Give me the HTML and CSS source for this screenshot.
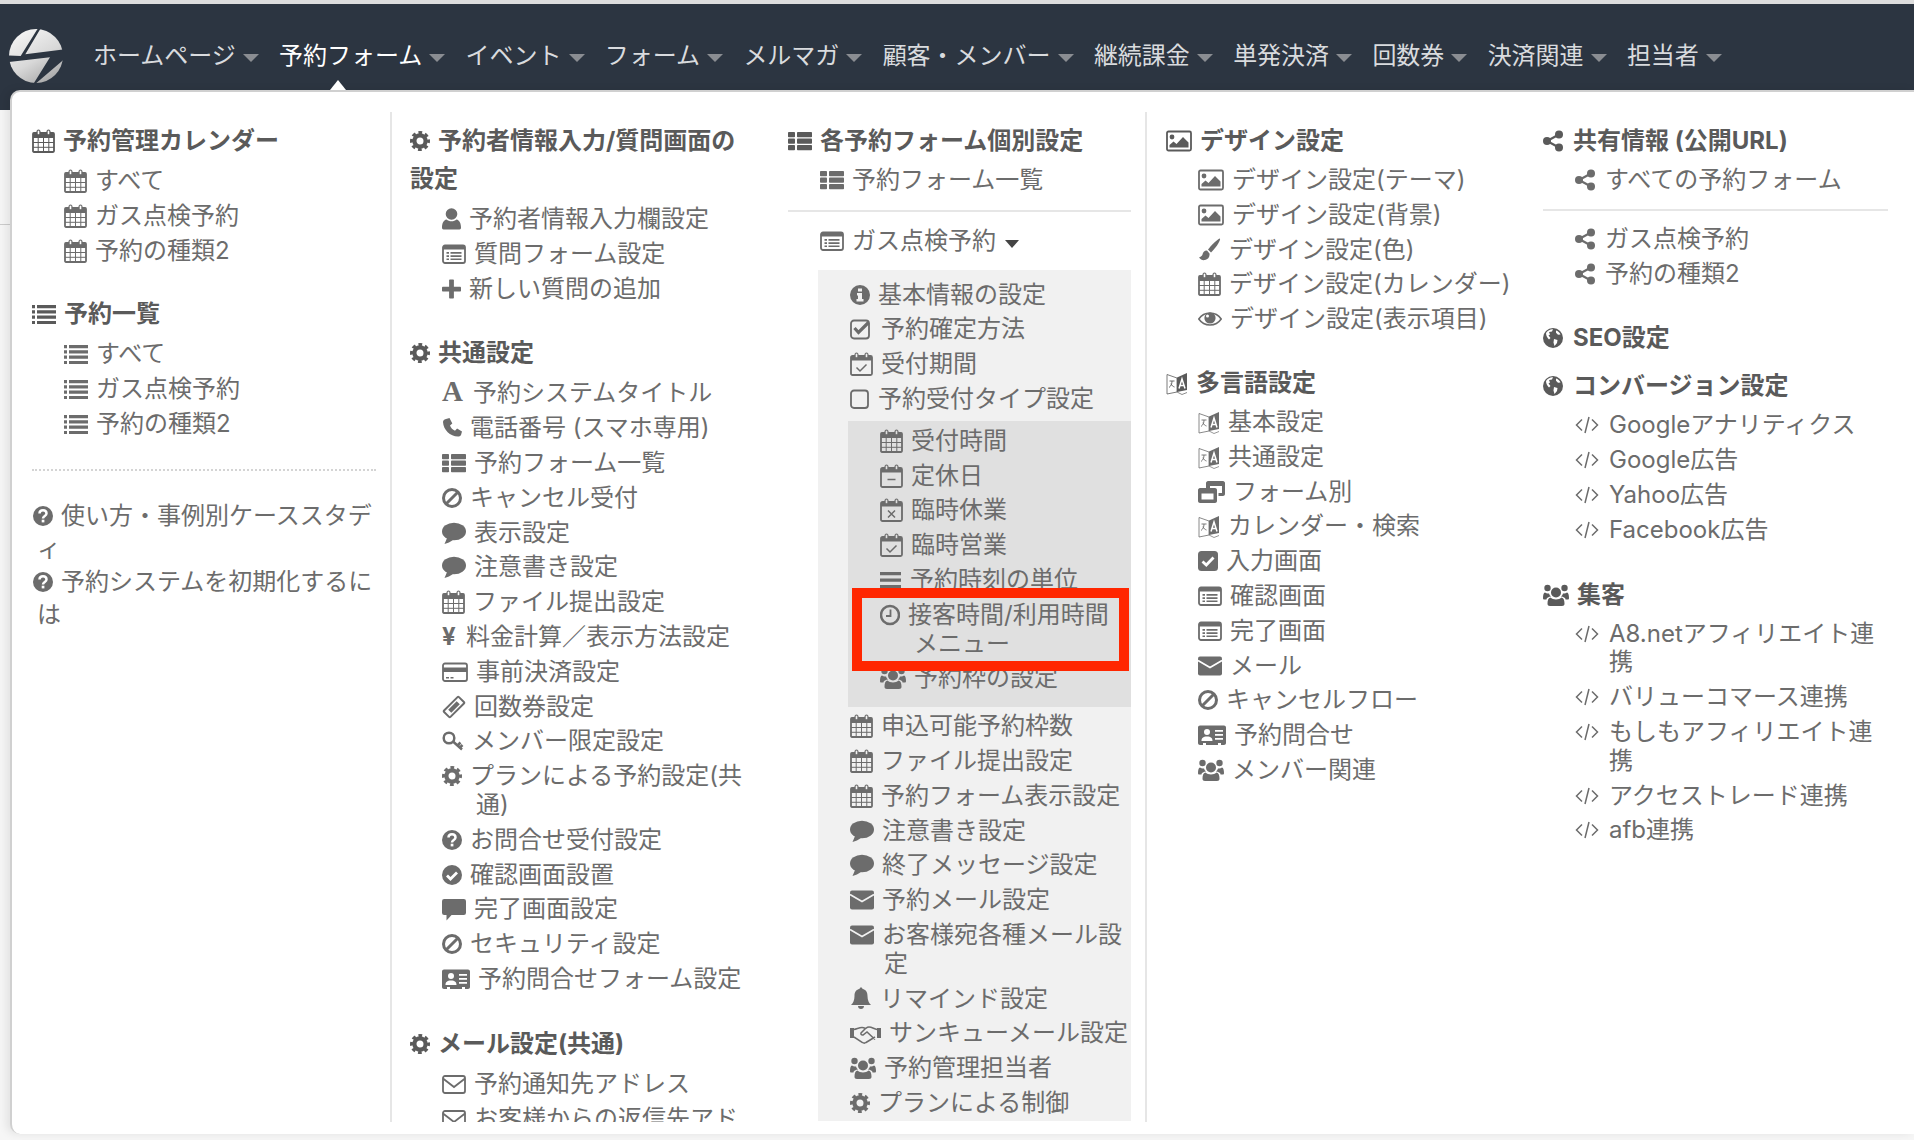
FILE: index.html
```html
<!DOCTYPE html>
<html lang="ja">
<head>
<meta charset="utf-8">
<title>予約フォーム</title>
<link rel="stylesheet" href="styles.css">
</head>
<body>
<svg class="defs" aria-hidden="true">
  <defs>
    <linearGradient id="lg" x1="0.2" y1="0" x2="0.8" y2="1"><stop offset="0" stop-color="#f6f6f6"/><stop offset="0.55" stop-color="#d8d8d8"/><stop offset="1" stop-color="#a4a4a4"/></linearGradient>
    <symbol id="cal" viewBox="0 0 23 24"><path d="M1.9 4h19.2c.5 0 .9.4.9.9v17.2c0 .5-.4.9-.9.9H1.900c-.5 0-.9-.4-.9-.9V4.900c0-.5.4-.9.900-.9z" fill="none" stroke="currentColor" stroke-width="1.800"/><rect x="1" y="4" width="21" height="5"/><path d="M1 13.500h21M1 18.300h21M6.200 9v14M11.500 9v14M16.800 9v14" fill="none" stroke="currentColor" stroke-width="1"/><rect x="4.500" y=".5" width="4" height="7" rx="2"/><rect x="14.500" y=".5" width="4" height="7" rx="2"/><rect x="5.700" y="1.700" width="1.600" height="3.500" fill="var(--bg)"/><rect x="15.700" y="1.700" width="1.600" height="3.500" fill="var(--bg)"/></symbol>
    <symbol id="calbase" viewBox="0 0 23 24"><rect x="1" y="4" width="21" height="19" rx="1.500" fill="none" stroke="currentColor" stroke-width="1.800"/><rect x="1" y="4" width="21" height="4.500"/><rect x="4.500" y=".5" width="4" height="7" rx="2"/><rect x="14.500" y=".5" width="4" height="7" rx="2"/><rect x="5.700" y="1.700" width="1.600" height="3.500" fill="var(--bg)"/><rect x="15.700" y="1.700" width="1.600" height="3.500" fill="var(--bg)"/></symbol>
    <symbol id="calcheck" viewBox="0 0 23 24"><use href="#calbase"/><path d="M6.500 15.500l3.500 3.500 6.500-6.500" fill="none" stroke="currentColor" stroke-width="1.500"/></symbol>
    <symbol id="calminus" viewBox="0 0 23 24"><use href="#calbase"/><path d="M7.500 15.500h8" fill="none" stroke="currentColor" stroke-width="1.500"/></symbol>
    <symbol id="caltimes" viewBox="0 0 23 24"><use href="#calbase"/><path d="M8 12.500l7 7M15 12.500l-7 7" fill="none" stroke="currentColor" stroke-width="1.500"/></symbol>
    <symbol id="list" viewBox="0 0 24 24"><path d="M0 3h3v3.200H0zM0 8.300h3v3.200H0zM0 13.600h3v3.200H0zM0 18.900h3v3.200H0zM5 3h19v3.200H5zM5 8.300h19v3.200H5zM5 13.600h19v3.200H5zM5 18.900h19v3.200H5z"/></symbol>
    <symbol id="thlist" viewBox="0 0 24 24"><rect x="0" y="3" width="7" height="5.200" rx=".8"/><rect x="0" y="9.500" width="7" height="5.200" rx=".8"/><rect x="0" y="16" width="7" height="5.200" rx=".8"/><rect x="9" y="3" width="15" height="5.200" rx=".8"/><rect x="9" y="9.500" width="15" height="5.200" rx=".8"/><rect x="9" y="16" width="15" height="5.200" rx=".8"/></symbol>
    <symbol id="gear" viewBox="0 0 20 24"><circle cx="10" cy="12" r="5.600" fill="none" stroke="currentColor" stroke-width="4.200"/><circle cx="10" cy="12" r="8.500" fill="none" stroke="currentColor" stroke-width="3" stroke-dasharray="3.700 2.970" stroke-dashoffset="1.800"/></symbol>
    <symbol id="user" viewBox="0 0 19 24"><circle cx="9.500" cy="7" r="5.800"/><path d="M1.500 22.500c-1 0-1.500-.8-1.500-2 0-4 1.500-7.500 4.500-8 1.300 1.200 3 1.800 5 1.800s3.700-.6 5-1.800c3 .5 4.500 4 4.500 8 0 1.200-.5 2-1.500 2z"/></symbol>
    <symbol id="listalt" viewBox="0 0 24 24"><rect x="1" y="3.500" width="22" height="17.500" rx="2" fill="none" stroke="currentColor" stroke-width="1.800"/><path d="M1 4h22v3.500H1zM4.500 10h2.500v1.700H4.500zM8.500 10h11v1.700h-11zM4.500 13.200h2.500v1.700H4.500zM8.500 13.200h11v1.700h-11zM4.500 16.400h2.500v1.700H4.500zM8.500 16.400h11v1.700h-11z"/></symbol>
    <symbol id="plus" viewBox="0 0 19 24"><rect x="0" y="9.700" width="19" height="4.800" rx=".8"/><rect x="7.100" y="2.500" width="4.800" height="19" rx=".8"/></symbol>
    <symbol id="phone" viewBox="0 0 20 24"><path d="M4 3l3.500-1 2.800 5.500-2.300 2c1 2.500 2.600 4.200 5 5.300l2.100-2.300 4.900 3-1 3.500c-.6 1-2 1.500-3 1.500C8 20.500 1.500 14 1 6c0-1 .8-2.500 3-3z"/></symbol>
    <symbol id="ban" viewBox="0 0 20 24"><circle cx="10" cy="12" r="8.500" fill="none" stroke="currentColor" stroke-width="3"/><path d="M4 18L16 6" fill="none" stroke="currentColor" stroke-width="3"/></symbol>
    <symbol id="comment" viewBox="0 0 24 24"><ellipse cx="12" cy="10.500" rx="12" ry="8.800"/><path d="M5.500 16L2.500 23c3 -.6 6-2.200 8.500-4z"/></symbol>
    <symbol id="commentalt" viewBox="0 0 24 24"><rect x="0" y="2" width="24" height="16" rx="2.200"/><path d="M4.500 17v6.500l6-6.500z"/></symbol>
    <symbol id="credit" viewBox="0 0 26 24"><rect x="1" y="3.500" width="24" height="17.500" rx="2" fill="none" stroke="currentColor" stroke-width="1.800"/><path d="M1 7.500h24v4.500H1zM4 17h3v1.500H4zM8.500 17h3v1.500h-3z"/></symbol>
    <symbol id="ticket" viewBox="0 0 24 24"><g transform="rotate(-45 12 12)"><rect x="1.500" y="7.500" width="21" height="9" rx="1" fill="none" stroke="currentColor" stroke-width="2"/><rect x="6" y="9.800" width="12" height="4.400"/></g></symbol>
    <symbol id="key" viewBox="0 0 22 24"><circle cx="7" cy="9" r="5.300" fill="none" stroke="currentColor" stroke-width="2.500"/><path d="M11 12.500l9 8M15.500 16.500l3-3M18 18.500l2.500-2.500" fill="none" stroke="currentColor" stroke-width="2.500"/></symbol>
    <symbol id="question" viewBox="0 0 20 24"><circle cx="10" cy="12" r="10"/><path d="M6.500 9.500c0-4.500 7-4.500 7 0 0 2.500-3.500 2.500-3.500 5" fill="none" stroke="var(--bg)" stroke-width="2.500"/><rect x="8.700" y="15.700" width="2.700" height="2.700" fill="var(--bg)"/></symbol>
    <symbol id="checkc" viewBox="0 0 20 24"><circle cx="10" cy="12" r="10"/><path d="M5 12.500l3.500 3.500 6.500-6.500" fill="none" stroke="var(--bg)" stroke-width="2.800"/></symbol>
    <symbol id="info" viewBox="0 0 20 24"><circle cx="10" cy="12" r="10"/><path d="M8 5.500h4v3H8zM7 10h5v6h1.500v2.500h-7V16H8v-3.500H7z" fill="var(--bg)"/></symbol>
    <symbol id="envo" viewBox="0 0 24 24"><rect x="1" y="4" width="22" height="17" rx="2" fill="none" stroke="currentColor" stroke-width="1.800"/><path d="M1 6.500l11 8.500 11-8.500" fill="none" stroke="currentColor" stroke-width="1.800"/></symbol>
    <symbol id="env" viewBox="0 0 24 24"><rect x="0" y="2.500" width="24" height="19" rx="2"/><path d="M0 6.500l12 7 12-7" fill="none" stroke="var(--bg)" stroke-width="1.600"/></symbol>
    <symbol id="checko" viewBox="0 0 23 24"><rect x="1" y="3.500" width="18" height="18" rx="3" fill="none" stroke="currentColor" stroke-width="1.800"/><path d="M4.500 11l4 4.500 10-10" fill="none" stroke="currentColor" stroke-width="3.200"/></symbol>
    <symbol id="squareo" viewBox="0 0 20 24"><rect x="1" y="3.500" width="17" height="17.500" rx="3" fill="none" stroke="currentColor" stroke-width="1.800"/></symbol>
    <symbol id="bars" viewBox="0 0 22 24"><path d="M0 4h21v3.200H0zM0 10.500h21v3.200H0zM0 17h21v3.200H0z"/></symbol>
    <symbol id="clock" viewBox="0 0 20 24"><circle cx="10" cy="12" r="9" fill="none" stroke="currentColor" stroke-width="2.500"/><path d="M10.500 6.500v6.500H6" fill="none" stroke="currentColor" stroke-width="1.800"/></symbol>
    <symbol id="users" viewBox="0 0 26 24"><circle cx="13" cy="9.500" r="5"/><circle cx="4.500" cy="5" r="3.200"/><circle cx="21.500" cy="5" r="3.200"/><path d="M7 23c-1.500 0-2.500-.8-2.500-2.200 0-3.300.8-6 2.800-6.300 1.500 1.300 3.500 2 5.700 2s4.200-.7 5.700-2c2 .3 2.800 3 2.800 6.300 0 1.400-1 2.200-2.500 2.200z"/><path d="M3.500 16.500H1.300C.5 16.500 0 16 0 15c0-3 .6-5.300 2-5.500 1.300 1 2.500 1.200 4 .9.400 1.200 1 2.200 2 3-2.500.4-4 1.100-4.500 2.600zM22.500 16.500h2.200c.8 0 1.300-.5 1.300-1.500 0-3-.6-5.300-2-5.500-1.300 1-2.500 1.200-4 .9-.4 1.200-1 2.200-2 3 2.500.4 4 1.100 4.500 2.600z"/></symbol>
    <symbol id="bell" viewBox="0 0 22 24"><path d="M11 .5c1 0 1.500.7 1.500 1.500 3.800.7 5 3.500 5 7 0 4.500 1.500 7 3.500 9H1c2-2 3.500-4.500 3.500-9 0-3.500 1.200-6.300 5-7 0-.8.500-1.500 1.500-1.500zM8 19h6c0 1.800-1.300 3-3 3s-3-1.200-3-3z"/></symbol>
    <symbol id="hand" viewBox="0 0 31 24"><path d="M0 7h4v10H0zM27 7h4v10h-4z"/><path d="M4 8.500c3-.5 5-2 8-2 1.500 0 2.500.5 3.500 1L11 12c-.5 1 .5 2.500 2 2l4-3 8 7.500M27 8.500c-3-.5-5-2.500-8-2.500-1.500 0-2.500.8-3.500 1.500M4 16l8.500 5.500c1 .7 2.500.7 3.500 0L25 16" fill="none" stroke="currentColor" stroke-width="1.500"/></symbol>
    <symbol id="pic" viewBox="0 0 26 24"><rect x="1" y="2.500" width="24" height="19" rx="1.500" fill="none" stroke="currentColor" stroke-width="1.800"/><circle cx="6" cy="8" r="2.400"/><path d="M3.500 18.500v-2.500l4-3.500 3 2.500 6.500-7 5.500 5.500v5z"/></symbol>
    <symbol id="brush" viewBox="0 0 23 24"><path d="M22 .5c-2 0-9 7-12 11l3 3c3.500-3 10-12 9-14z"/><path d="M9 12.500c-3 0-4 2-4.500 4-.3 1.300-2 2.700-3.500 3 1.500 2 3.500 3 6 2.500 3-.5 5-3 4.500-6.500z"/></symbol>
    <symbol id="eye" viewBox="0 0 24 24"><path d="M.8 12C3.500 8 7.500 6 12 6s8.500 2 11.200 6c-2.700 4-6.700 6-11.200 6s-8.500-2-11.200-6z" fill="none" stroke="currentColor" stroke-width="1.600"/><circle cx="12" cy="11" r="5.600"/><circle cx="9.500" cy="9" r="1.500" fill="var(--bg)"/></symbol>
    <symbol id="lang" viewBox="0 0 22 24"><path d="M1 3.500l10 3.500v14l-10 2z" fill="none" stroke="currentColor" stroke-width=".8"/><path d="M11 6.500l10-4.500v17l-10 2z"/><path d="M11 21l5 2.500 5-2" fill="none" stroke="currentColor" stroke-width=".7"/><path d="M3.500 10h5M6 10c0 3-1 5-3 6.500M5 12.500c.5 2 2 3 3.500 3.500" fill="none" stroke="currentColor" stroke-width=".9"/><path d="M13 17.500l3-9.500 3 9.500M14 14.500h4" fill="none" stroke="var(--bg)" stroke-width="1.500"/></symbol>
    <symbol id="win" viewBox="0 0 27 24"><path d="M2 8h15c1 0 2 .8 2 2v11c0 1-1 2-2 2H2c-1 0-2-1-2-2V10c0-1 1-2 2-2zm1.500 5.500v6h12v-6z"/><path d="M10 1h15c1 0 2 1 2 2v11c0 1-1 2-2 2h-4.500v-3H24V6H12v2H8V3c0-1 1-2 2-2z"/></symbol>
    <symbol id="checks" viewBox="0 0 20 24"><rect x="0" y="2" width="20" height="20" rx="3.500"/><path d="M4.500 12.500l3.800 3.500 7.200-7.500" fill="none" stroke="var(--bg)" stroke-width="2.800"/></symbol>
    <symbol id="addr" viewBox="0 0 28 24"><path d="M2 2.500h24c1.100 0 2 .9 2 2v15.500c0 1.100-.9 2-2 2h-3v-2h-3v2H8v-2H5v2H2c-1.100 0-2-.9-2-2V4.500c0-1.100.9-2 2-2z"/><circle cx="9" cy="9" r="3" fill="var(--bg)"/><path d="M3.500 18c0-3 1.500-4.500 5.500-4.500s5.500 1.500 5.500 4.500zM17 7h8v1.800h-8zM17 11h8v1.800h-8zM17 15h8v1.800h-8z" fill="var(--bg)"/></symbol>
    <symbol id="share" viewBox="0 0 20 24"><circle cx="4" cy="12" r="4"/><circle cx="16" cy="5.500" r="4"/><circle cx="16" cy="18.500" r="4"/><path d="M4 12L16 5.500M4 12l12 6.500" fill="none" stroke="currentColor" stroke-width="2.200"/></symbol>
    <symbol id="globe" viewBox="0 0 20 24"><circle cx="10" cy="12" r="10"/><path d="M3 7c2-3 5-4 7-3.700L9 5.500l-3 .5 1 2.500-1.500 1 2 2.500-1.500 1.500C4.500 12 3 10 3 7zM11 13l3.500 1-.5 3-2.500 3-1-3.500zM13 4.500c2 .5 3.500 2 4.500 4l-2.500.2-2-2z" fill="var(--bg)"/></symbol>
    <symbol id="code" viewBox="0 0 24 24"><path d="M7 6.500L1.500 12l5.500 5.500M17 6.500l5.500 5.500-5.500 5.500M14 4l-4 16" fill="none" stroke="currentColor" stroke-width="1.500"/></symbol>
  </defs>
</svg>

<header class="navbar">
  <svg class="logo" viewBox="27 87 162 162" aria-hidden="true">
    <circle cx="108" cy="168" r="81" fill="url(#lg)"/>
    <path d="M122 85L112 88L62 168L24 166L24 186L150 172L100 252L108 250L192 178L192 148L76 163Z" fill="#2c3541"/>
  </svg>
  <nav class="menu">
    <a class="menu-item">ホームページ<i class="caret"></i></a>
    <a class="menu-item active">予約フォーム<i class="caret"></i></a>
    <a class="menu-item">イベント<i class="caret"></i></a>
    <a class="menu-item">フォーム<i class="caret"></i></a>
    <a class="menu-item">メルマガ<i class="caret"></i></a>
    <a class="menu-item">顧客・メンバー<i class="caret"></i></a>
    <a class="menu-item">継続課金<i class="caret"></i></a>
    <a class="menu-item">単発決済<i class="caret"></i></a>
    <a class="menu-item">回数券<i class="caret"></i></a>
    <a class="menu-item">決済関連<i class="caret"></i></a>
    <a class="menu-item">担当者<i class="caret"></i></a>
  </nav>
</header>

<main class="panel">
  <section class="col col-1">
    <h3><svg class="ic w23"><use href="#cal"/></svg>予約管理カレンダー</h3>
    <ul class="items">
      <li><svg class="ic w23"><use href="#cal"/></svg>すべて</li>
      <li><svg class="ic w23"><use href="#cal"/></svg>ガス点検予約</li>
      <li><svg class="ic w23"><use href="#cal"/></svg>予約の種類2</li>
    </ul>
    <h3><svg class="ic w24"><use href="#list"/></svg>予約一覧</h3>
    <ul class="items">
      <li><svg class="ic w24"><use href="#list"/></svg>すべて</li>
      <li><svg class="ic w24"><use href="#list"/></svg>ガス点検予約</li>
      <li><svg class="ic w24"><use href="#list"/></svg>予約の種類2</li>
    </ul>
    <hr class="dotted">
    <p class="help"><svg class="ic w20"><use href="#question"/></svg>使い方・事例別ケーススタディ</p>
    <p class="help"><svg class="ic w20"><use href="#question"/></svg>予約システムを初期化するには</p>
  </section>

  <section class="col col-2">
    <h3><svg class="ic w20"><use href="#gear"/></svg>予約者情報入力/質問画面の<br>設定</h3>
    <ul class="items">
      <li><svg class="ic w19"><use href="#user"/></svg>予約者情報入力欄設定</li>
      <li><svg class="ic w24"><use href="#listalt"/></svg>質問フォーム設定</li>
      <li><svg class="ic w19"><use href="#plus"/></svg>新しい質問の追加</li>
    </ul>
    <h3><svg class="ic w20"><use href="#gear"/></svg>共通設定</h3>
    <ul class="items">
      <li><span class="glyph-a">A</span>予約システムタイトル</li>
      <li><svg class="ic w20"><use href="#phone"/></svg>電話番号 (スマホ専用)</li>
      <li><svg class="ic w24"><use href="#thlist"/></svg>予約フォーム一覧</li>
      <li><svg class="ic w20"><use href="#ban"/></svg>キャンセル受付</li>
      <li><svg class="ic w24"><use href="#comment"/></svg>表示設定</li>
      <li><svg class="ic w24"><use href="#comment"/></svg>注意書き設定</li>
      <li><svg class="ic w23"><use href="#cal"/></svg>ファイル提出設定</li>
      <li><span class="glyph-yen">¥</span>料金計算／表示方法設定</li>
      <li><svg class="ic w26"><use href="#credit"/></svg>事前決済設定</li>
      <li><svg class="ic w24"><use href="#ticket"/></svg>回数券設定</li>
      <li><svg class="ic w22"><use href="#key"/></svg>メンバー限定設定</li>
      <li><svg class="ic w20"><use href="#gear"/></svg>プランによる予約設定(共通)</li>
      <li><svg class="ic w20"><use href="#question"/></svg>お問合せ受付設定</li>
      <li><svg class="ic w20"><use href="#checkc"/></svg>確認画面設置</li>
      <li><svg class="ic w24"><use href="#commentalt"/></svg>完了画面設定</li>
      <li><svg class="ic w20"><use href="#ban"/></svg>セキュリティ設定</li>
      <li><svg class="ic w28"><use href="#addr"/></svg>予約問合せフォーム設定</li>
    </ul>
    <h3><svg class="ic w20"><use href="#gear"/></svg>メール設定(共通)</h3>
    <ul class="items">
      <li><svg class="ic w24"><use href="#envo"/></svg>予約通知先アドレス</li>
      <li><svg class="ic w24"><use href="#envo"/></svg>お客様からの返信先アドレス</li>
    </ul>
  </section>

  <section class="col col-3">
    <h3><svg class="ic w24"><use href="#thlist"/></svg>各予約フォーム個別設定</h3>
    <ul class="items">
      <li><svg class="ic w24"><use href="#thlist"/></svg>予約フォーム一覧</li>
    </ul>
    <hr class="rule rule-3">
    <ul class="items gas">
      <li><svg class="ic w24"><use href="#listalt"/></svg>ガス点検予約<i class="mini-caret"></i></li>
    </ul>
    <div class="sub">
      <ul class="items flat">
        <li><svg class="ic w20"><use href="#info"/></svg>基本情報の設定</li>
        <li><svg class="ic w23"><use href="#checko"/></svg>予約確定方法</li>
        <li><svg class="ic w23"><use href="#calcheck"/></svg>受付期間</li>
        <li><svg class="ic w20"><use href="#squareo"/></svg>予約受付タイプ設定</li>
      </ul>
      <div class="subsub">
        <ul class="items flat">
          <li><svg class="ic w23"><use href="#cal"/></svg>受付時間</li>
          <li><svg class="ic w23"><use href="#calminus"/></svg>定休日</li>
          <li><svg class="ic w23"><use href="#caltimes"/></svg>臨時休業</li>
          <li><svg class="ic w23"><use href="#calcheck"/></svg>臨時営業</li>
          <li><svg class="ic w22"><use href="#bars"/></svg>予約時刻の単位</li>
          <li><svg class="ic w20"><use href="#clock"/></svg>接客時間/利用時間メニュー</li>
          <li><svg class="ic w26"><use href="#users"/></svg>予約枠の設定</li>
        </ul>
        <div class="annotation"></div>
      </div>
      <ul class="items flat">
        <li><svg class="ic w23"><use href="#cal"/></svg>申込可能予約枠数</li>
        <li><svg class="ic w23"><use href="#cal"/></svg>ファイル提出設定</li>
        <li><svg class="ic w23"><use href="#cal"/></svg>予約フォーム表示設定</li>
        <li><svg class="ic w24"><use href="#comment"/></svg>注意書き設定</li>
        <li><svg class="ic w24"><use href="#comment"/></svg>終了メッセージ設定</li>
        <li><svg class="ic w24"><use href="#env"/></svg>予約メール設定</li>
        <li><svg class="ic w24"><use href="#env"/></svg>お客様宛各種メール設定</li>
        <li><svg class="ic w22"><use href="#bell"/></svg>リマインド設定</li>
        <li><svg class="ic w31"><use href="#hand"/></svg>サンキューメール設定</li>
        <li><svg class="ic w26"><use href="#users"/></svg>予約管理担当者</li>
        <li><svg class="ic w20"><use href="#gear"/></svg>プランによる制御</li>
      </ul>
    </div>
  </section>

  <section class="col col-4">
    <h3><svg class="ic w26"><use href="#pic"/></svg>デザイン設定</h3>
    <ul class="items">
      <li><svg class="ic w26"><use href="#pic"/></svg>デザイン設定(テーマ)</li>
      <li><svg class="ic w26"><use href="#pic"/></svg>デザイン設定(背景)</li>
      <li><svg class="ic w23"><use href="#brush"/></svg>デザイン設定(色)</li>
      <li><svg class="ic w23"><use href="#cal"/></svg>デザイン設定(カレンダー)</li>
      <li><svg class="ic w24"><use href="#eye"/></svg>デザイン設定(表示項目)</li>
    </ul>
    <h3><svg class="ic w22"><use href="#lang"/></svg>多言語設定</h3>
    <ul class="items">
      <li><svg class="ic w22"><use href="#lang"/></svg>基本設定</li>
      <li><svg class="ic w22"><use href="#lang"/></svg>共通設定</li>
      <li><svg class="ic w27"><use href="#win"/></svg>フォーム別</li>
      <li><svg class="ic w22"><use href="#lang"/></svg>カレンダー・検索</li>
      <li><svg class="ic w20"><use href="#checks"/></svg>入力画面</li>
      <li><svg class="ic w24"><use href="#listalt"/></svg>確認画面</li>
      <li><svg class="ic w24"><use href="#listalt"/></svg>完了画面</li>
      <li><svg class="ic w24"><use href="#env"/></svg>メール</li>
      <li><svg class="ic w20"><use href="#ban"/></svg>キャンセルフロー</li>
      <li><svg class="ic w28"><use href="#addr"/></svg>予約問合せ</li>
      <li><svg class="ic w26"><use href="#users"/></svg>メンバー関連</li>
    </ul>
  </section>

  <section class="col col-5">
    <h3><svg class="ic w20 wide"><use href="#share"/></svg>共有情報 (公開URL)</h3>
    <ul class="items">
      <li><svg class="ic w20 wide"><use href="#share"/></svg>すべての予約フォーム</li>
    </ul>
    <hr class="rule rule-5">
    <ul class="items">
      <li><svg class="ic w20 wide"><use href="#share"/></svg>ガス点検予約</li>
      <li><svg class="ic w20 wide"><use href="#share"/></svg>予約の種類2</li>
    </ul>
    <h3><svg class="ic w20 wide"><use href="#globe"/></svg>SEO設定</h3>
    <h3 class="tight"><svg class="ic w20 wide"><use href="#globe"/></svg>コンバージョン設定</h3>
    <ul class="items">
      <li><svg class="ic w24 wide"><use href="#code"/></svg>Googleアナリティクス</li>
      <li><svg class="ic w24 wide"><use href="#code"/></svg>Google広告</li>
      <li><svg class="ic w24 wide"><use href="#code"/></svg>Yahoo広告</li>
      <li><svg class="ic w24 wide"><use href="#code"/></svg>Facebook広告</li>
    </ul>
    <h3><svg class="ic w26"><use href="#users"/></svg>集客</h3>
    <ul class="items">
      <li><svg class="ic w24 wide"><use href="#code"/></svg>A8.netアフィリエイト連携</li>
      <li><svg class="ic w24 wide"><use href="#code"/></svg>バリューコマース連携</li>
      <li><svg class="ic w24 wide"><use href="#code"/></svg>もしもアフィリエイト連携</li>
      <li><svg class="ic w24 wide"><use href="#code"/></svg>アクセストレード連携</li>
      <li><svg class="ic w24 wide"><use href="#code"/></svg>afb連携</li>
    </ul>
  </section>
</main>
</body>
</html>
```
FILE: styles.css
```css
* { box-sizing: border-box; }
html, body { height: 100%; }
body {
  margin: 0;
  padding-top: 4px;
  overflow: hidden;
  --bg: #fff;
  font-family: "Inter", "Liberation Sans", "Noto Sans CJK JP", sans-serif;
  font-size: 24px;
  color: #6c6c6c;
  background:
    linear-gradient(to bottom, #ddd 0, #ddd 4px, transparent 4px, transparent 224px, #ccc 224px, #ccc 225px, transparent 225px),
    #f6f6f6;
}
.defs { position: absolute; width: 0; height: 0; }

.navbar {
  display: flex;
  align-items: flex-start;
  height: 106px;
  padding: 25px 0 0 9px;
  background: #2c3541;
}
.logo { width: 54px; height: 54px; flex: none; }
.menu { display: flex; margin: 10px 0 0 30px; line-height: 34px; }
.menu-item {
  position: relative;
  display: flex;
  align-items: center;
  padding-right: 20.25px;
  color: #d9dbde;
  white-space: nowrap;
}
.menu-item.active { color: #fff; }
.menu-item.active::after {
  content: "";
  position: absolute;
  left: 51px;
  top: 41px;
  border-left: 8px solid transparent;
  border-right: 8px solid transparent;
  border-bottom: 10px solid #fff;
  z-index: 3;
}
.caret {
  width: 0;
  height: 0;
  margin: 3px 0 0 7px;
  border-left: 8px solid transparent;
  border-right: 8px solid transparent;
  border-top: 8px solid #8a8d92;
}

.panel {
  position: relative;
  z-index: 2;
  display: grid;
  grid-template-columns: 380px 377px 378px 378px 379px;
  height: 1044px;
  margin: -20px 0 0 10px;
  padding-top: 20px;
  background: #fff;
  border-top: 2px solid #d0d0d0;
  border-left: 2px solid #d0d0d0;
  border-top-left-radius: 10px;
  border-bottom-left-radius: 10px;
  box-shadow: -4px 0 8px rgba(0, 0, 0, .08);
}
.col {
  height: 1010px;
  padding-top: 10px;
  overflow: hidden;
}
.col-1 { padding-left: 20px; padding-right: 14px; border-right: 2px solid #e6e6e6; }
.col-2 { padding-left: 18px; padding-right: 16px; }
.col-3 { padding-left: 19px; padding-right: 14px; border-right: 2px solid #e6e6e6; }
.col-4 { padding-left: 19px; padding-right: 0; }
.col-5 { padding-left: 18px; padding-right: 16px; }

h3 {
  margin: 0 0 3px;
  font-size: 24px;
  line-height: 38px;
  font-weight: 700;
  color: #5a5a5a;
}
.col-1 h3, .col-2 h3 { margin-bottom: 4px; }
h3.tight { margin-top: 10px; }
.items {
  list-style: none;
  margin: 0 0 28px;
  padding: 0 0 0 32px;
}
.col-1 .items, .col-4 .items { margin-bottom: 27px; }
.items li {
  padding: 3px 0 3px 34px;
  text-indent: -34px;
  line-height: 28.8px;
}
.ic {
  display: inline-block;
  height: 24px;
  margin-right: 8px;
  vertical-align: -4px;
  fill: currentColor;
  text-indent: 0;
}
.ic.wide { margin-right: 10px; }
.w19 { width: 19px; }
.w20 { width: 20px; }
.w22 { width: 22px; }
.w23 { width: 23px; }
.w24 { width: 24px; }
.w26 { width: 26px; }
.w27 { width: 27px; }
.w28 { width: 28px; }
.w31 { width: 31px; }

.glyph-a {
  display: inline-block;
  width: 23px;
  margin-right: 8px;
  font: 700 29px/24px "Liberation Serif", serif;
  text-indent: 0;
}
.glyph-yen {
  display: inline-block;
  width: 15px;
  margin-right: 9px;
  font-weight: 700;
  text-indent: 0;
}

.rule { height: 2px; border: 0; background: #e6e6e6; }
.rule-3 { margin: -16px 0 12px; }
.rule-5 { margin: -17px 0 11px; }
.dotted { height: 0; margin: 4px 0 28px; border: 0; border-top: 2px dotted #d4d4d4; }

.help {
  margin: 0 0 0 1px;
  padding-left: 4px;
  text-indent: -4px;
  line-height: 33px;
  line-break: anywhere;
}

.items.flat { margin: 0; padding-left: 32px; }
.items.gas { margin-bottom: 11px; }
.sub {
  --bg: #f1f1f1;
  margin-left: 30px;
  padding-top: 8px;
  background: #f1f1f1;
}
.subsub {
  --bg: #e0e0e0;
  position: relative;
  margin: 4px 0 2px 30px;
  padding: 3px 0 11px;
  background: #e0e0e0;
}
.subsub .items.flat { padding-right: 6px; }
.annotation {
  position: absolute;
  left: 4px;
  top: 167px;
  width: 277px;
  height: 83px;
  border: 10px solid #ff2600;
}
.mini-caret {
  display: inline-block;
  width: 0;
  height: 0;
  margin-left: 9px;
  vertical-align: 1px;
  border-left: 7px solid transparent;
  border-right: 7px solid transparent;
  border-top: 8px solid #444;
}
```
